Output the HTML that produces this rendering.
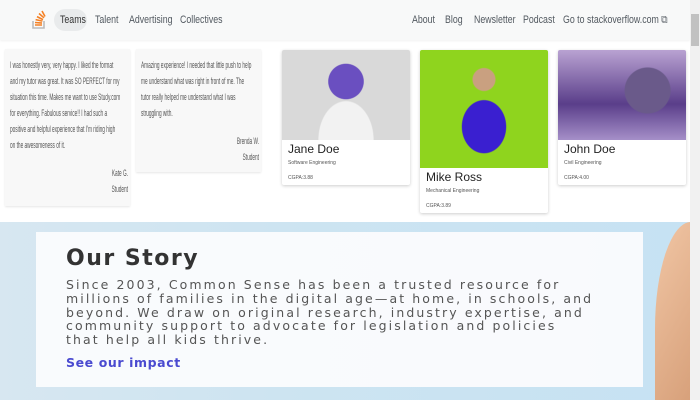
<!DOCTYPE html>
<html><head><meta charset="utf-8"><style>
*{margin:0;padding:0;box-sizing:border-box}
html,body{width:700px;height:400px;overflow:hidden}
body{background:#fff;font-family:"Liberation Sans",sans-serif;position:relative}
.nav{position:absolute;left:0;top:0;width:690px;height:40px;background:#f8f9f9;box-shadow:0 1px 2px rgba(0,0,0,.06);font-size:11px;color:#525960}
.nav span{position:absolute;top:14px;transform:scaleX(.8);transform-origin:left;white-space:nowrap}
.teams{position:absolute;left:54px;top:9px;width:33px;height:22px;border-radius:11px;background:#e9ebec}
.sb{position:absolute;right:0;top:0;width:10px;height:400px;background:#f1f1f1}
.sb i{position:absolute;left:1px;top:14px;width:8px;height:32px;background:#c1c1c1}
.tcard{position:absolute;background:#f8f8f8;box-shadow:0 1px 2px rgba(0,0,0,.1);overflow:hidden}
.tcard .w{position:absolute;left:5px;top:9px;width:236px;transform:scaleX(.5);transform-origin:left top;font-size:9.5px;color:#555;line-height:16px;white-space:nowrap}
.tcard .s{text-align:right;margin-top:12px;line-height:16px}
.pc{position:absolute;background:#fff;box-shadow:0 1px 3px rgba(0,0,0,.2);border-radius:2px;overflow:hidden}
.pc .img{height:90px}
.pc h3{font-weight:normal;font-size:12px;color:#222;margin:2px 0 0 6px}
.pc p{font-size:5px;color:#555;margin:4px 0 0 6px}
.pc p+p{margin-top:9px}
.hero{position:absolute;left:0;top:222px;width:690px;height:178px;background:linear-gradient(90deg,#d7e7f1,#cde4f1 40%,#c6e2f3)}
.arm{position:absolute;left:655px;top:222px;width:60px;height:178px;border-radius:60% 0 0 0;background:linear-gradient(120deg,#f1c6a5,#d39a73)}
.box{position:absolute;left:36px;top:232px;width:607px;height:155px;background:rgba(250,251,253,.97);font-family:"DejaVu Sans",sans-serif}
.box h2{position:absolute;left:30px;top:14px;font-size:22px;color:#333;font-weight:bold;letter-spacing:1.5px}
.box .t{position:absolute;left:30px;top:46px;width:580px;font-size:12.5px;line-height:13.8px;color:#555;letter-spacing:2.1px;white-space:nowrap}
.box a{position:absolute;left:30px;top:123px;font-size:12.5px;color:#4a4ad0;font-weight:bold;text-decoration:none;letter-spacing:.6px}
</style></head><body>
<div class="nav">
<svg style="position:absolute;left:31px;top:7px" width="16" height="24" viewBox="0 0 16 24"><path d="M2 14v7h11v-7" fill="none" stroke="#bcbbbb" stroke-width="1.6"/><path d="M4 18h7M4 15.5l7 .6M4.6 12.6l6.8 1.5M6 9.6l6 3M8 6.5l5 4.3M11 4l3 5.5" stroke="#f48024" stroke-width="1.6"/></svg>
<div class="teams"></div>
<span style="left:60px;color:#333">Teams</span><span style="left:95px">Talent</span><span style="left:129px">Advertising</span><span style="left:180px">Collectives</span>
<span style="left:412px">About</span><span style="left:445px">Blog</span><span style="left:474px">Newsletter</span><span style="left:523px">Podcast</span><span style="left:563px">Go to stackoverflow.com ⧉</span>
</div>
<div class="tcard" style="left:5px;top:49px;width:125px;height:157px"><div class="w">I was honestly very, very happy. I liked the format<br>and my tutor was great. It was SO PERFECT for my<br>situation this time. Makes me want to use Study.com<br>for everything. Fabulous service!! I had such a<br>positive and helpful experience that I'm riding high<br>on the awesomeness of it.<div class="s">Kate G.<br>Student</div></div></div>
<div class="tcard" style="left:136px;top:49px;width:125px;height:123px"><div class="w">Amazing experience! I needed that little push to help<br>me understand what was right in front of me. The<br>tutor really helped me understand what I was<br>struggling with.<div class="s">Brenda W.<br>Student</div></div></div>
<div class="pc" style="left:282px;top:50px;width:128px;height:135px"><div class="img" style="background:radial-gradient(circle at 50% 35%,#6a4fc0 0 20%,transparent 21%),radial-gradient(ellipse at 50% 100%,#f2f2f2 0 30%,transparent 31%),#d9d9d9"></div><h3>Jane Doe</h3><p>Software Engineering</p><p>CGPA:3.88</p></div>
<div class="pc" style="left:420px;top:50px;width:128px;height:163px"><div class="img" style="height:118px;background:radial-gradient(ellipse at 50% 65%,#3a1fd0 0 24%,transparent 25%),radial-gradient(circle at 50% 25%,#c9a080 0 10%,transparent 11%),#8fd41e"></div><h3>Mike Ross</h3><p>Mechanical Engineering</p><p>CGPA:3.89</p></div>
<div class="pc" style="left:558px;top:50px;width:128px;height:135px"><div class="img" style="background:radial-gradient(circle at 70% 45%,#6a5a8a 0 22%,transparent 23%),linear-gradient(180deg,#b9a2d2,#5a3e8a 60%,#a58fc8)"></div><h3>John Doe</h3><p>Civil Engineering</p><p>CGPA:4.00</p></div>
<div class="hero"></div><div class="arm"></div>
<div class="box"><h2>Our Story</h2><div class="t">Since 2003, Common Sense has been a trusted resource for<br>millions of families in the digital age—at home, in schools, and<br>beyond. We draw on original research, industry expertise, and<br>community support to advocate for legislation and policies<br>that help all kids thrive.</div><a>See our impact</a></div>
<div class="sb"><i></i></div>
</body></html>
